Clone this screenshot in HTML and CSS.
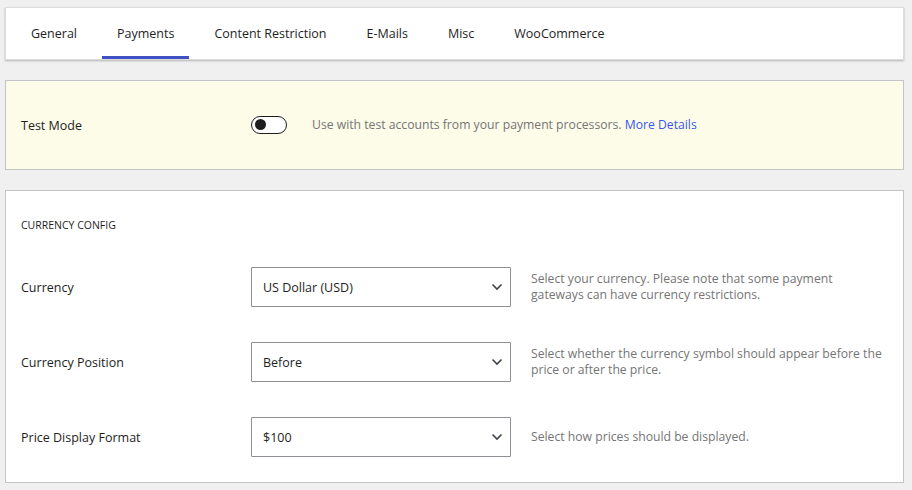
FILE: index.html
```html
<!DOCTYPE html>
<html lang="en">
<head>
<meta charset="utf-8">
<title>Payments Settings</title>
<link rel="stylesheet" href="styles.css">
</head>
<body>
<div class="page">
  <nav class="tabs">
    <a class="tab">General</a>
    <a class="tab active">Payments</a>
    <a class="tab">Content Restriction</a>
    <a class="tab">E-Mails</a>
    <a class="tab">Misc</a>
    <a class="tab">WooCommerce</a>
  </nav>

  <section class="card test">
    <div class="row test-row">
      <div class="label">Test Mode</div>
      <div class="control">
        <span class="toggle"><span class="knob"></span></span>
      </div>
      <div class="desc test-desc">Use with test accounts from your payment processors. <a class="link">More Details</a></div>
    </div>
  </section>

  <section class="card config">
    <h2 class="heading">CURRENCY CONFIG</h2>
    <div class="row">
      <div class="label">Currency</div>
      <div class="select"><span>US Dollar (USD)</span><svg class="chev" width="12" height="8" viewBox="0 0 12 8"><path d="M1.5 1.5 6 6l4.5-4.5" fill="none" stroke="#3c434a" stroke-width="1.6"/></svg></div>
      <div class="desc">Select your currency. Please note that some payment gateways can have currency restrictions.</div>
    </div>
    <div class="row">
      <div class="label">Currency Position</div>
      <div class="select"><span>Before</span><svg class="chev" width="12" height="8" viewBox="0 0 12 8"><path d="M1.5 1.5 6 6l4.5-4.5" fill="none" stroke="#3c434a" stroke-width="1.6"/></svg></div>
      <div class="desc">Select whether the currency symbol should appear before the price or after the price.</div>
    </div>
    <div class="row">
      <div class="label">Price Display Format</div>
      <div class="select"><span>$100</span><svg class="chev" width="12" height="8" viewBox="0 0 12 8"><path d="M1.5 1.5 6 6l4.5-4.5" fill="none" stroke="#3c434a" stroke-width="1.6"/></svg></div>
      <div class="desc">Select how prices should be displayed.</div>
    </div>
  </section>
</div>
</body>
</html>
```

FILE: styles.css
```css
* { box-sizing: border-box; }
html, body { margin: 0; padding: 0; }
body {
  background: #f0f0f1;
  font-family: "Open Sans", "Noto Sans", "Liberation Sans", sans-serif;
  font-size: 12.5px;
  color: #1e1e1e;
}
.page {
  padding: 7px 8px 0 5px;
  display: flex;
  flex-direction: column;
  gap: 20px;
}
.tabs {
  display: flex;
  gap: 10px;
  padding: 0 9px 0 10px;
  height: 53px;
  background: #fff;
  border: 1px solid #dcdcde;
  box-shadow: 0 1px 2px rgba(0, 0, 0, 0.25);
}
.tab {
  display: flex;
  align-items: center;
  padding: 3px 15px 1px;
  color: #1e1e1e;
  border-bottom: 3px solid transparent;
}
.tab.active {
  border-bottom-color: #3f51c3;
}
.card {
  border: 1px solid #c3c4c7;
  background: #fff;
}
.card.test {
  background: #fcfce9;
  height: 90px;
  padding: 0 15px;
  display: flex;
  align-items: center;
}
.card.test .row { flex: 1; }
.card.config {
  padding: 25px 15px 25px;
  display: flex;
  flex-direction: column;
  gap: 35px;
}
.heading {
  margin: 1px 0 -1px;
  font-size: 10.5px;
  font-weight: 400;
  line-height: 16px;
  color: #1e1e1e;
}
.row {
  display: grid;
  grid-template-columns: 230px 260px 1fr;
  align-items: center;
  min-height: 40px;
}
.test-row {
  grid-template-columns: 230px 36px 1fr;
}
.label {
  font-weight: 500;
  color: #1e1e1e;
}
.toggle {
  display: block;
  width: 36px;
  height: 18px;
  border: 1.5px solid #1e1e1e;
  border-radius: 9px;
  background: #fff;
  position: relative;
}
.knob {
  position: absolute;
  left: 3px;
  top: 2px;
  width: 11px;
  height: 11px;
  border-radius: 50%;
  background: #1e1e1e;
}
.link { color: #3858e9; text-decoration: none; }
.select {
  height: 40px;
  border: 1px solid #8c8f94;
  border-radius: 1px;
  display: flex;
  align-items: center;
  justify-content: space-between;
  padding: 0 7px 0 11px;
  color: #1e1e1e;
  background: #fff;
}
.chev { display: block; }
.desc {
  padding-left: 20px;
  color: #757575;
  font-size: 12.2px;
  line-height: 16px;
}
.test-desc {
  padding-left: 25px;
  white-space: nowrap;
}
```
